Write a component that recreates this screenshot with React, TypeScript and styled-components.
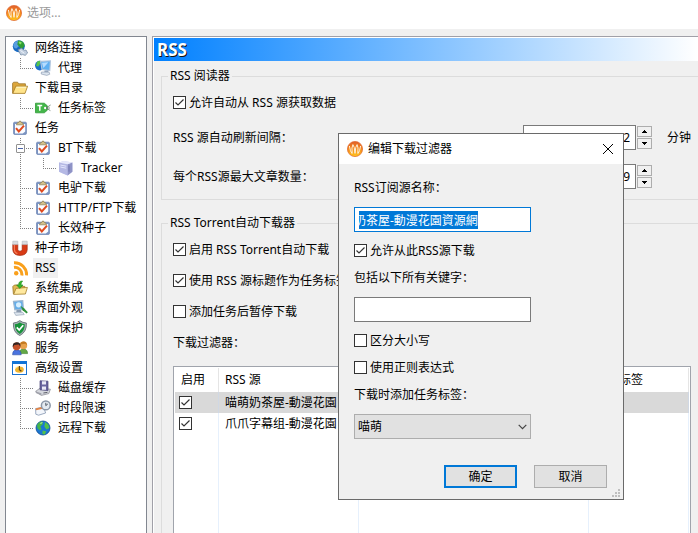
import React, { useEffect, useRef, type ReactNode } from "react";
import styled, { createGlobalStyle } from "styled-components";

const GlobalStyle = createGlobalStyle`
  *, *::before, *::after { box-sizing: border-box; }
  body {
    margin: 0;
    background: #f0f0f0;
    color: #000;
    font: 12px/20px "Noto Sans", "Noto Sans CJK SC", sans-serif;
  }
  button, input, select { font: inherit; color: inherit; }
`;

/* ---------- icons ---------- */

const Svg = styled.svg`
  display: block;
  flex: none;
  width: 16px;
  height: 16px;
`;

const AppLogo = () => (
  <Svg viewBox="0 0 16 16" aria-hidden="true">
    <defs>
      <linearGradient id="logoFill" x1="0" y1="0" x2="0" y2="1">
        <stop offset="0" stopColor="#e0602c" />
        <stop offset="0.5" stopColor="#f58a1c" />
        <stop offset="1" stopColor="#ffc81e" />
      </linearGradient>
    </defs>
    <circle cx="8" cy="8" r="7.6" fill="url(#logoFill)" stroke="#e0642c" strokeWidth="0.7" />
    <path d="M2.4 5Q3 10 5 12.6M5.2 12.4Q4.4 6 5.9 3.6Q7.6 5 7.9 12.4M8.1 12.4Q8.4 5 10.1 3.6Q11.6 6 10.8 12.4M11 12.6Q13 10 13.6 5" fill="none" stroke="#fff0d8" strokeWidth="1" />
  </Svg>
);

const NetworkIcon = () => (
  <Svg viewBox="0 0 16 16" aria-hidden="true">
    <circle cx="6.8" cy="6.2" r="6" fill="#1769c2" />
    <path d="M3 1.8Q6 .2 7 1.4L5.6 4 7 6 4.4 8.6Q1.4 8 1.2 5Z" fill="#5a9fe0" />
    <path d="M6 .6Q12 .6 12.6 5.6L10.4 9 8 7.6 5.4 4.4Z" fill="#2f9e35" />
    <path d="M6.6 1.4l3 .6-.6 2.4-2-.8z" fill="#8be06a" />
    <path d="M6 9.8l3.6-1.6 2.6 2.2 1.8-.4 1.6 3-2.4 2.4-2.4-.8-2 .4z" fill="#c2cfdf" stroke="#6f859f" strokeWidth="0.7" />
    <path d="M8.4 10.4l4 3" stroke="#eef4fb" />
  </Svg>
);

const ProxyIcon = () => (
  <Svg viewBox="0 0 16 16" aria-hidden="true">
    <circle cx="4.8" cy="5.6" r="4.8" fill="#1b6ecb" />
    <path d="M2 2Q4.6 0 6 1.2L5 4 3.4 6.6 1 6Z" fill="#57c44a" />
    <path d="M5.6 1.4L15.4.8 14.8 10.6 7 9.6Z" fill="#5fb0f2" stroke="#b4c6dc" strokeWidth="1.1" />
    <path d="M7 2.8l6.4-.6L8.4 8Z" fill="#b6dcff" />
    <path d="M9.6 10.6h3.6l.4 2H9.2z" fill="#98a9bf" />
    <path d="M6.4 12l7.8.2.6 2-3 1.2-5.6-1.4z" fill="#dbe4ee" stroke="#8596ad" strokeWidth="0.6" />
  </Svg>
);

const FolderIcon = () => (
  <Svg viewBox="0 0 16 16" aria-hidden="true">
    <path d="M.6 13.4V3.2l1-1h4l1.2 1.6h6.6v3" fill="#dda63a" stroke="#9b7428" strokeWidth="0.8" />
    <path d="M.8 13.4L3.8 6.2h11.8l-2.6 7.2z" fill="#ffe48a" stroke="#a37a25" strokeWidth="0.8" />
    <path d="M4.4 7.2h9.8" stroke="#fff7cf" />
  </Svg>
);

const TagIcon = () => (
  <Svg viewBox="0 0 16 16" aria-hidden="true">
    <path d="M.5 3.2h8.8l3 2.6v4.4l-3 2.6H.5z" fill="#43b649" stroke="#2d9836" strokeWidth="0.8" />
    <path d="M2.4 5.4h4.8M4.8 5.4v5.4" stroke="#fff" strokeWidth="1.5" />
    <circle cx="10.2" cy="8" r="1.2" fill="#fff" />
    <path d="M11 8l4.6-3M11 8l4.4 2.6M11 8h4" fill="none" stroke="#6a7a6c" strokeWidth="0.8" />
  </Svg>
);

const TaskIcon = () => (
  <Svg viewBox="0 0 16 16" aria-hidden="true">
    <rect x="1.6" y="2.2" width="12.8" height="12.2" rx="1" fill="#7d96c4" stroke="#6b83b3" strokeWidth="0.8" />
    <path d="M3 4h10.2v7.6L10.8 13.6H3z" fill="#fbfcff" />
    <path d="M4.4 4.8L5.6 2.6 7 2.2Q8 -.6 9 2.2l1.4.4 1.2 2.2z" fill="#d4c08a" stroke="#8d7c50" strokeWidth="0.7" />
    <path d="M4 8.2l2.8 3.2 5.2-5.8" fill="none" stroke="#df4a1f" strokeWidth="2" />
  </Svg>
);

const TrackerIcon = () => (
  <Svg viewBox="0 0 16 16" aria-hidden="true">
    <path d="M1 2.6L5.8 1l8.6 1.4v9.4L9.6 15.4 1 11.8z" fill="#c9cdf0" />
    <path d="M1 2.6l8.6 1.6v11.2L1 11.8z" fill="#b4b8e4" />
    <path d="M9.6 4.2l4.8-1.8v9.4l-4.8 3.6z" fill="#8f93c6" />
    <path d="M1 2.6L5.8 1l8.6 1.4-4.8 1.8z" fill="#e6e8fb" />
    <path d="M2.4 5l5.8 1.2M2.4 7l5.8 1.2" stroke="#e9ebff" strokeWidth="0.9" />
    <path d="M11 5.6v6" stroke="#6a6fac" strokeWidth="0.8" />
  </Svg>
);

const MagnetIcon = () => (
  <Svg viewBox="0 0 16 16" aria-hidden="true">
    <path d="M.8 4.4h5v5q0 1.8 2.2 1.8t2.2-1.8v-5h5v5.4Q14.8 15.4 8 15.4T.8 9.8z" fill="#d83a15" stroke="#a32a0e" strokeWidth="0.7" />
    <path d="M2.4 5v4.6q.2 3 3 4" fill="none" stroke="#f5805c" strokeWidth="1.1" />
    <path d="M.8 1.2h5v3.4h-5zM10.2 1.2h5v3.4h-5z" fill="#d8dbe0" stroke="#b4b8be" strokeWidth="0.6" />
  </Svg>
);

const RssIcon = () => (
  <Svg viewBox="0 0 16 16" aria-hidden="true">
    <circle cx="4.2" cy="13.2" r="2.2" fill="#f9a01c" />
    <path d="M2 7.4A7 7 0 0 1 9.8 15.4M2 2.8A12 12 0 0 1 14.6 15.4" fill="none" stroke="#f9a01c" strokeWidth="3" />
  </Svg>
);

const IntegrationIcon = () => (
  <Svg viewBox="0 0 16 16" aria-hidden="true">
    <path d="M1.4 14L.8 6.6 2.4 5h3.4l1.6 1.4h5.4v2" fill="#e0b955" stroke="#9a7626" strokeWidth="0.8" />
    <path d="M1.6 14.4L4 8.4l11.4-1-2 6.6z" fill="#ffe99f" stroke="#a37f2c" strokeWidth="0.8" />
    <path d="M10.6 1Q6.6.8 6.6 5H4.6l3.2 3.4L11 5H9Q8.8 2.8 10.6 1z" fill="#37b52c" stroke="#1e8a1b" strokeWidth="0.6" />
  </Svg>
);

const AppearanceIcon = () => (
  <Svg viewBox="0 0 16 16" aria-hidden="true">
    <path d="M1.4 1.4L10.8.6l.6 8.6-8.6.6z" fill="#65aee9" stroke="#9db6ce" strokeWidth="1.1" />
    <circle cx="6.6" cy="4.8" r="2.6" fill="#d6efff" />
    <path d="M4.6 10h4.6l.4 2.4H4.2z" fill="#8999ad" />
    <path d="M2 12.2l8.8.2 1.4 2.2-8.4.8z" fill="#dde5ee" stroke="#8b9cb0" strokeWidth="0.6" />
    <path d="M8.4 5.8l3.6 2.4 3.8 4-1.2 1.4-4-3.4z" fill="#2f9138" />
  </Svg>
);

const ShieldIcon = () => (
  <Svg viewBox="0 0 16 16" aria-hidden="true">
    <path d="M7.8.6Q10.6 2.8 14.4 3q.6 8.8-6.6 12.6Q.8 12.2 1.4 3 5 2.8 7.8.6z" fill="#a5b1b4" stroke="#59686b" strokeWidth="0.8" />
    <path d="M7.8 2.4Q10.4 4 12.8 4.2q.2 6.6-5 9.8-5-3-5-9.8Q5.6 4 7.8 2.4z" fill="#17933a" />
    <path d="M4.8 7.4l2.4 2.6 4-4.8" fill="none" stroke="#fff" strokeWidth="1.7" />
  </Svg>
);

const ServiceIcon = () => (
  <Svg viewBox="0 0 16 16" aria-hidden="true">
    <path d="M7.4 13.6q0-4.6 4-4.6t4.2 4.6z" fill="#63a845" stroke="#3e7a2c" strokeWidth="0.6" />
    <circle cx="11.4" cy="5.4" r="3.8" fill="#e8a24d" />
    <path d="M7.8 4.4q1-3.2 4-3t3.2 3.8l-1.6-1.4z" fill="#c47a22" />
    <path d="M.6 14.8q0-5 4.2-5t4.4 5z" fill="#4a73df" stroke="#2c4da5" strokeWidth="0.6" />
    <circle cx="4.6" cy="6.4" r="3.8" fill="#c5522a" />
    <path d="M.8 7.2Q.2 2.4 4.6 2.2t3.8 4.6L6.8 4.6 2.4 5z" fill="#342522" />
  </Svg>
);

const AdvancedIcon = () => (
  <Svg viewBox="0 0 16 16" aria-hidden="true">
    <rect x="0.5" y="1.5" width="14" height="13" fill="#fff" stroke="#1a73d1" />
    <path d="M0 1h15v3H0z" fill="#1173d6" />
    <ellipse cx="7.4" cy="9.6" rx="4.4" ry="3.2" fill="#f1b52e" />
    <path d="M7.4 6v3.6l2 1.6" fill="none" stroke="#5b4014" strokeWidth="1.2" />
    <path d="M3.4 8.8Q4 6.6 6 6.6" fill="none" stroke="#fff2b8" />
  </Svg>
);

const DiskIcon = () => (
  <Svg viewBox="0 0 16 16" aria-hidden="true">
    <path d="M.6 11.4L5 8.2l10.4 1-1.6 4.4-7.4 1.8z" fill="#d5d7dd" stroke="#85878f" strokeWidth="0.7" />
    <path d="M.6 11.4l5.8 1.8v2.2L.8 13z" fill="#9fa1aa" />
    <path d="M5 .8l8 .4v9.4L5 9.8z" fill="#69659f" stroke="#474477" strokeWidth="0.7" />
    <path d="M7 1.2h4v3.4H7zM7 6.6h4v3.2H7z" fill="#e9e9f6" />
    <path d="M8.4 13l4-.6" stroke="#5f616a" />
  </Svg>
);

const ScheduleIcon = () => (
  <Svg viewBox="0 0 16 16" aria-hidden="true">
    <path d="M.6 8.6l8-1.6 2 6-7 2.2-2.8-1z" fill="#f3f6fb" stroke="#8394b0" strokeWidth="0.8" />
    <path d="M.6 8.4l8-1.8.5 1.8-8 1.8z" fill="#e38445" />
    <circle cx="10.8" cy="5.4" r="4.4" fill="#e4eaf1" stroke="#8b97a8" strokeWidth="1.5" />
    <path d="M10.8 2.8v2.8l2-1.6" fill="none" stroke="#4d5663" />
  </Svg>
);

const RemoteIcon = () => (
  <Svg viewBox="0 0 16 16" aria-hidden="true">
    <circle cx="8" cy="8" r="7" fill="#1b76d3" stroke="#0e4c93" strokeWidth="0.8" />
    <path d="M2 5Q4 1.6 7.4 1.6L8 4 5.4 6.4 6.6 9 5 10.4 2.6 8.4z" fill="#45b649" />
    <path d="M10 2l3.2 2.2L14.4 8l-3 1.6L9.4 6.4zM7.6 10.4l3.6.8-1.4 3.2-2.4-.4z" fill="#52c24a" />
    <path d="M5.4 3.4l2-.8" stroke="#c5f5c0" />
  </Svg>
);

/* ---------- shared form parts ---------- */

const CheckFrame = styled.span`
  display: inline-grid;
  flex: none;
  width: 13px;
  height: 13px;
  > * { grid-area: 1 / 1; }
  svg { width: 13px; height: 13px; pointer-events: none; visibility: hidden; }
  input:checked + svg { visibility: visible; }
`;

const CheckRow = styled.label`
  display: flex;
  align-items: flex-start;
  gap: 3px;
  height: 20px;
  white-space: nowrap;
  ${CheckFrame} { margin-top: 3px; }
`;

const CheckInput = styled.input`
  appearance: none;
  width: 13px;
  height: 13px;
  margin: 0;
  background: #fff;
  border: 1px solid #333;
`;

const Box = ({ id, on, label }: { id?: string; on?: boolean; label?: string }) => (
  <CheckFrame>
    <CheckInput type="checkbox" id={id} defaultChecked={on} aria-label={label} />
    <svg viewBox="0 0 13 13" aria-hidden="true">
      <path d="M2.5 6.5L5 9l5.5-5.5" fill="none" stroke="#333" strokeWidth="1.2" />
    </svg>
  </CheckFrame>
);

const Check = ({ id, on, children }: { id: string; on?: boolean; children: ReactNode }) => (
  <CheckRow htmlFor={id}>
    <Box id={id} on={on} />
    <span>{children}</span>
  </CheckRow>
);

const TextInput = styled.input<{ $active?: boolean; $align?: "right" }>`
  display: block;
  width: 100%;
  height: 25px;
  padding: 0 5px 0 4px;
  border: 1px solid ${(p) => (p.$active ? "#0078d7" : "#7a7a7a")};
  border-radius: 0;
  outline: 0;
  background: #fff;
  text-align: ${(p) => p.$align ?? "left"};
  text-indent: ${(p) => (p.$active ? "-5px" : "0")};
  &::selection { background: #0078d7; color: #fff; }
`;

/* ---------- window ---------- */

const Window = styled.div`
  display: flex;
  flex-direction: column;
  height: 100vh;
  overflow: hidden;
  position: relative;
`;

const TitleBar = styled.header`
  display: flex;
  flex: none;
  align-items: center;
  gap: 5px;
  height: 29px;
  padding: 0 6px 3px;
  background: #fff;
  color: #999;
`;

const Content = styled.div`
  display: flex;
  flex: 1;
  gap: 5px;
  min-height: 0;
  padding: 7px 0 0 5px;
`;

/* ---------- tree ---------- */

const Tree = styled.ul`
  flex: none;
  width: 142px;
  margin: 0;
  padding: 1px 0 0 6px;
  list-style: none;
  background: #fff;
  border: 1px solid #828790;
  border-bottom: 0;
`;

const TreeRow = styled.li`
  display: flex;
  align-items: center;
  height: 20px;
  white-space: nowrap;
`;

type GuideKind = "tee" | "end" | "line" | "none";

const dotsDown = "repeating-linear-gradient(#808080 0 1px, transparent 1px 2px)";
const dotsRight = "repeating-linear-gradient(90deg, #808080 0 1px, transparent 1px 2px)";
const guideBackground: Record<GuideKind, string> = {
  tee: `${dotsDown} 8px 0 / 1px 20px no-repeat, ${dotsRight} 8px 10px / 13px 1px no-repeat`,
  end: `${dotsDown} 8px 0 / 1px 10px no-repeat, ${dotsRight} 8px 10px / 13px 1px no-repeat`,
  line: `${dotsDown} 8px 0 / 1px 20px no-repeat`,
  none: "none",
};

const Guide = styled.span<{ $kind: GuideKind }>`
  display: flex;
  align-items: center;
  flex: none;
  width: 23px;
  height: 20px;
  padding-left: 4px;
  background: ${(p) => guideBackground[p.$kind]};
`;

const Expander = styled.button`
  width: 9px;
  height: 9px;
  padding: 3px 1px;
  border: 1px solid #919191;
  border-radius: 1px;
  background: linear-gradient(#4b63a7, #4b63a7) center / 5px 1px no-repeat, #fff;
`;

const TreeLabel = styled.a<{ $selected?: boolean }>`
  margin-left: 5px;
  padding: 0 2px;
  color: inherit;
  text-decoration: none;
  background: ${(p) => (p.$selected ? "#f0f0f0" : "transparent")};
`;

type Node = { text: string; icon: ReactNode; guides?: GuideKind[]; open?: boolean; selected?: boolean };

const nodes: Node[] = [
  { text: "网络连接", icon: <NetworkIcon /> },
  { text: "代理", icon: <ProxyIcon />, guides: ["end"] },
  { text: "下载目录", icon: <FolderIcon /> },
  { text: "任务标签", icon: <TagIcon />, guides: ["end"] },
  { text: "任务", icon: <TaskIcon /> },
  { text: "BT下载", icon: <TaskIcon />, guides: ["tee"], open: true },
  { text: "Tracker", icon: <TrackerIcon />, guides: ["line", "end"] },
  { text: "电驴下载", icon: <TaskIcon />, guides: ["tee"] },
  { text: "HTTP/FTP下载", icon: <TaskIcon />, guides: ["tee"] },
  { text: "长效种子", icon: <TaskIcon />, guides: ["end"] },
  { text: "种子市场", icon: <MagnetIcon /> },
  { text: "RSS", icon: <RssIcon />, selected: true },
  { text: "系统集成", icon: <IntegrationIcon /> },
  { text: "界面外观", icon: <AppearanceIcon /> },
  { text: "病毒保护", icon: <ShieldIcon /> },
  { text: "服务", icon: <ServiceIcon /> },
  { text: "高级设置", icon: <AdvancedIcon /> },
  { text: "磁盘缓存", icon: <DiskIcon />, guides: ["tee"] },
  { text: "时段限速", icon: <ScheduleIcon />, guides: ["tee"] },
  { text: "远程下载", icon: <RemoteIcon />, guides: ["end"] },
];

/* ---------- settings page ---------- */

const Page = styled.main`
  display: flex;
  flex: 1;
  flex-direction: column;
  min-width: 0;
  border: solid #a0a0a8;
  border-width: 1px 0 0 1px;
  box-shadow: inset 1px 1px #fff;
  padding: 1px 0 0 1px;
`;

const PageTitle = styled.h1`
  flex: none;
  height: 23px;
  margin: 0;
  padding-left: 3px;
  background: linear-gradient(90deg, #0080ff, #fff);
  color: #fff;
  font-size: 17px;
  line-height: 23px;
  text-shadow: 1px 1px #111;
`;

const Group = styled.fieldset`
  min-width: 0;
  margin: 6px 0 0 7px;
  padding: 8px 7px 10px 11px;
  border: 1px solid #dcdcdc;
  border-right: 0;
  & + & {
    display: flex;
    flex: 1;
    flex-direction: column;
    gap: 11px;
    min-height: 0;
    margin-top: 14px;
    padding-bottom: 0;
    border-bottom: 0;
  }
`;

const GroupTitle = styled.legend`
  margin-left: -5px;
  padding: 0 2px;
  line-height: 18px;
`;

const SpinRow = styled.div`
  display: grid;
  grid-template-columns: 350px 113px 16px auto;
  align-items: center;
  height: 25px;
  margin-top: 14px;
  white-space: nowrap;
  ${CheckRow} + & { margin-top: 12px; }
`;

const SpinButtons = styled.span`
  display: grid;
  gap: 1px;
  margin-left: 1px;
`;

const SpinButton = styled.button`
  display: grid;
  place-items: center;
  width: 15px;
  height: 11px;
  padding: 0;
  border: 1px solid #adadad;
  background: #f0f0f0;
  svg { width: 5px; height: 3px; }
`;

const Unit = styled.span`
  margin-left: 15px;
`;

const Spin = ({ id, label, value, unit }: { id: string; label: string; value: string; unit?: string }) => (
  <SpinRow>
    <label htmlFor={id}>{label}</label>
    <TextInput id={id} defaultValue={value} $align="right" />
    <SpinButtons>
      <SpinButton aria-label="增加"><svg viewBox="0 0 5 3"><path d="M2 0h1v1h1v1h1v1H0V2h1V1h1z" /></svg></SpinButton>
      <SpinButton aria-label="减少"><svg viewBox="0 0 5 3"><path d="M0 0h5v1H4v1H3v1H2V2H1V1H0z" /></svg></SpinButton>
    </SpinButtons>
    {unit && <Unit>{unit}</Unit>}
  </SpinRow>
);

const ListTitle = styled.div`
  height: 20px;
`;

const ListFrame = styled.div`
  display: grid;
  flex: 1;
  min-height: 0;
  margin-top: 2px;
  padding: 1px 1px 0;
  overflow: hidden;
  background: #fff;
  border: 1px solid #a0a4ac;
  border-bottom: 0;
`;

const List = styled.table`
  width: 100%;
  height: 100%;
  table-layout: fixed;
  border-collapse: separate;
  border-spacing: 0;
`;

const Col = styled.col<{ $w?: number }>`
  width: ${(p) => (p.$w ? `${p.$w}px` : "auto")};
`;

const HeadCell = styled.th`
  height: 24px;
  padding: 0 6px;
  border-right: 1px solid #e5e5e5;
  font-weight: 400;
  text-align: left;
  white-space: nowrap;
`;

const Row = styled.tr<{ $selected?: boolean }>`
  height: 21px;
  background: ${(p) => (p.$selected ? "#d9d9d9" : "transparent")};
  td { border-right-color: ${(p) => (p.$selected ? "#d0d8e4" : "#e6f0fc")}; }
`;

const Cell = styled.td`
  padding: 0 6px;
  border-right: 1px solid #e6f0fc;
  overflow: hidden;
  white-space: nowrap;
`;

const BoxCell = styled(Cell)`
  padding: 0 4px;
  ${CheckFrame} { display: grid; }
`;

const Filler = styled.tr``;

/* ---------- dialog ---------- */

const Dialog = styled.section`
  position: absolute;
  top: 133px;
  left: 338px;
  width: 286px;
  background: #f0f0f0;
  border: 1px solid #6a6a6a;
`;

const DialogTitle = styled.header`
  display: flex;
  align-items: center;
  gap: 5px;
  height: 30px;
  padding: 0 10px 0 8px;
  background: #fff;
`;

const CloseButton = styled.button`
  display: grid;
  place-items: center;
  width: 10px;
  height: 10px;
  margin-left: auto;
  padding: 0;
  border: 0;
  background: none;
  svg { width: 10px; height: 10px; }
`;

const DialogForm = styled.form`
  padding: 7px 16px 11px 15px;
`;

const Fields = styled.div`
  width: 177px;
  ${CheckRow} { margin-top: 7px; }
  ${TextInput} + ${CheckRow} { margin-top: 9px; }
`;

const FieldLabel = styled.label`
  display: block;
  height: 20px;
  margin: 7px 0 9px;
`;

const SelectFrame = styled.div`
  display: grid;
  align-items: center;
  > * { grid-area: 1 / 1; }
  svg { justify-self: end; width: 9px; height: 6px; margin-right: 4px; pointer-events: none; }
`;

const Select = styled.select`
  appearance: none;
  width: 100%;
  height: 25px;
  padding: 0 3px;
  border: 1px solid #adadad;
  border-radius: 0;
  background: #e1e1e1;
`;

const Buttons = styled.div`
  display: flex;
  justify-content: flex-end;
  gap: 17px;
  margin-top: 26px;
`;

const Button = styled.button<{ $primary?: boolean }>`
  width: 73px;
  height: 23px;
  padding: 0;
  border: ${(p) => (p.$primary ? "2px solid #0078d7" : "1px solid #adadad")};
  background: #e1e1e1;
  line-height: 18px;
`;

const Grip = styled.svg`
  position: absolute;
  right: 3px;
  bottom: 2px;
  width: 8px;
  height: 8px;
  fill: #bfbfbf;
`;

export default function App() {
  const nameRef = useRef<HTMLInputElement>(null);

  useEffect(() => {
    nameRef.current?.focus();
    nameRef.current?.select();
  }, []);

  return (
    <Window>
      <GlobalStyle />
      <TitleBar>
        <AppLogo />
        <span>选项...</span>
      </TitleBar>
      <Content>
        <Tree>
          {nodes.map((n) => (
            <TreeRow key={n.text}>
              {n.guides?.map((kind, i) => (
                <Guide key={i} $kind={kind}>
                  {n.open && <Expander aria-label="折叠" />}
                </Guide>
              ))}
              {n.icon}
              <TreeLabel href="#" $selected={n.selected}>{n.text}</TreeLabel>
            </TreeRow>
          ))}
        </Tree>
        <Page>
          <PageTitle>RSS</PageTitle>
          <Group>
            <GroupTitle>RSS 阅读器</GroupTitle>
            <Check id="fetch" on>允许自动从 RSS 源获取数据</Check>
            <Spin id="interval" label="RSS 源自动刷新间隔：" value="2" unit="分钟" />
            <Spin id="max" label="每个RSS源最大文章数量：" value="9" />
          </Group>
          <Group>
            <GroupTitle>RSS Torrent自动下载器</GroupTitle>
            <Check id="auto" on>启用 RSS Torrent自动下载</Check>
            <Check id="useTitle" on>使用 RSS 源标题作为任务标签</Check>
            <Check id="pause">添加任务后暂停下载</Check>
            <ListTitle id="filters">下载过滤器：</ListTitle>
            <ListFrame>
              <List aria-labelledby="filters">
                <colgroup>
                  <Col $w={44} />
                  <Col $w={140} />
                  <Col $w={230} />
                  <Col />
                </colgroup>
                <thead>
                  <tr>
                    <HeadCell>启用</HeadCell>
                    <HeadCell>RSS 源</HeadCell>
                    <HeadCell />
                    <HeadCell>任务标签</HeadCell>
                  </tr>
                </thead>
                <tbody>
                  <Row $selected>
                    <BoxCell><Box on label="启用" /></BoxCell>
                    <Cell>喵萌奶茶屋-動漫花園</Cell>
                    <Cell />
                    <Cell />
                  </Row>
                  <Row>
                    <BoxCell><Box on label="启用" /></BoxCell>
                    <Cell>爪爪字幕组-動漫花園</Cell>
                    <Cell />
                    <Cell />
                  </Row>
                  <Filler>
                    <Cell />
                    <Cell />
                    <Cell />
                    <Cell />
                  </Filler>
                </tbody>
              </List>
            </ListFrame>
          </Group>
        </Page>
      </Content>

      <Dialog role="dialog" aria-labelledby="dialogTitle">
        <DialogTitle>
          <AppLogo />
          <span id="dialogTitle">编辑下载过滤器</span>
          <CloseButton aria-label="关闭">
            <svg viewBox="0 0 10 10"><path d="M0 0l10 10M10 0L0 10" stroke="#000" strokeWidth="1" /></svg>
          </CloseButton>
        </DialogTitle>
        <DialogForm onSubmit={(e) => e.preventDefault()}>
          <Fields>
            <FieldLabel htmlFor="name">RSS订阅源名称：</FieldLabel>
            <TextInput id="name" ref={nameRef} defaultValue="奶茶屋-動漫花園資源網" $active />
            <Check id="allow" on>允许从此RSS源下载</Check>
            <FieldLabel htmlFor="include">包括以下所有关键字：</FieldLabel>
            <TextInput id="include" />
            <Check id="case">区分大小写</Check>
            <Check id="regex">使用正则表达式</Check>
            <FieldLabel htmlFor="tag">下载时添加任务标签：</FieldLabel>
            <SelectFrame>
              <Select id="tag"><option>喵萌</option></Select>
              <svg viewBox="0 0 9 6" aria-hidden="true"><path d="M.7.8l3.8 3.8L8.3.8" fill="none" stroke="#444" strokeWidth="1.2" /></svg>
            </SelectFrame>
          </Fields>
          <Buttons>
            <Button type="submit" $primary>确定</Button>
            <Button type="button">取消</Button>
          </Buttons>
        </DialogForm>
        <Grip viewBox="0 0 8 8" aria-hidden="true">
          <path d="M6 0h2v2H6zM3 3h2v2H3zM6 3h2v2H6zM0 6h2v2H0zM3 6h2v2H3zM6 6h2v2H6z" />
        </Grip>
      </Dialog>
    </Window>
  );
}
